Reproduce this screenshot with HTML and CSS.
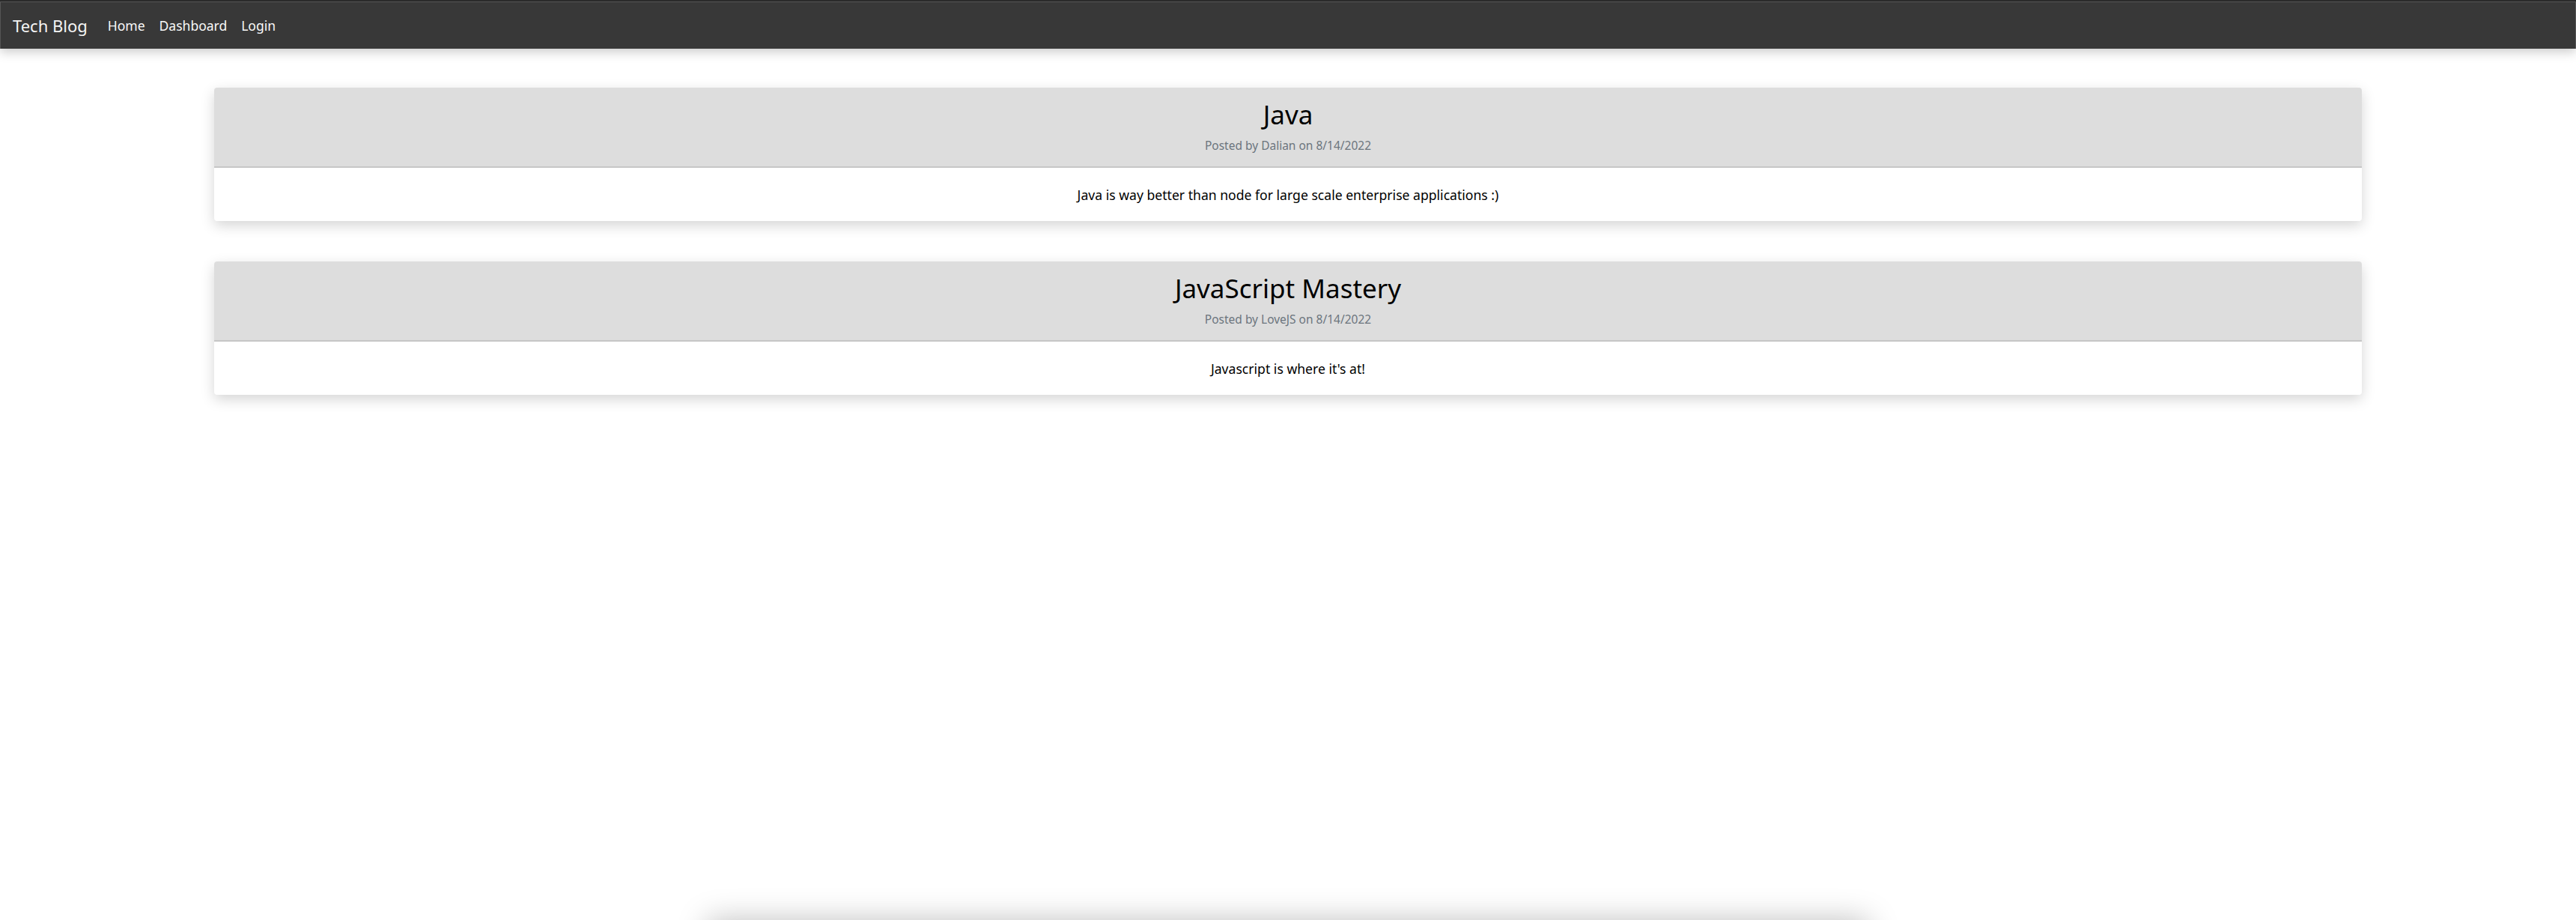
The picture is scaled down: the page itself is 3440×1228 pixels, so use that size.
FILE: index.html
```html
<!DOCTYPE html>
<html lang="en">
<head>
<meta charset="utf-8">
<title>Tech Blog</title>
<link rel="stylesheet" href="styles.css">
</head>
<body>
<div class="page">
  <nav class="navbar">
    <a class="brand" href="#">Tech Blog</a>
    <ul class="nav-links">
      <li><a href="#">Home</a></li>
      <li><a href="#">Dashboard</a></li>
      <li><a href="#">Login</a></li>
    </ul>
  </nav>
  <main class="posts">
    <article class="post">
      <header class="post-header">
        <h2 class="post-title">Java</h2>
        <p class="post-meta">Posted by Dalian on 8/14/2022</p>
      </header>
      <div class="post-body">
        <p>Java is way better than node for large scale enterprise applications :)</p>
      </div>
    </article>
    <article class="post">
      <header class="post-header">
        <h2 class="post-title">JavaScript Mastery</h2>
        <p class="post-meta">Posted by LoveJS on 8/14/2022</p>
      </header>
      <div class="post-body">
        <p>Javascript is where it's at!</p>
      </div>
    </article>
  </main>
</div>
<footer class="footer"></footer>
</body>
</html>
```
FILE: styles.css
```css
* { box-sizing: border-box; }
html, body { margin: 0; padding: 0; }
body {
  background: #ffffff;
  font-family: "Noto Sans", "Open Sans", sans-serif;
  color: #000;
}
.page { min-height: 100vh; }
.navbar {
  display: flex;
  align-items: center;
  height: 65px;
  padding: 0 0 0 17px;
  background: #383838;
  border-top: 2px solid #2a2a2a;
  box-shadow: inset 1px 1px 0 #555, inset -1px 0 0 #555, 0 4px 14px rgba(0,0,0,0.22);
  position: relative;
  z-index: 2;
}
.brand {
  color: #f4f4f4;
  font-size: 22px;
  text-decoration: none;
  margin-right: 27px;
}
.nav-links {
  display: flex;
  gap: 19px;
  list-style: none;
  margin: 0;
  padding: 0;
}
.nav-links a {
  color: #f8f8f8;
  font-size: 17.5px;
  text-decoration: none;
}
.posts {
  display: flex;
  flex-direction: column;
  gap: 54px;
  width: 2868px;
  margin: 52px auto 0;
}
.post {
  border-radius: 4px;
  overflow: hidden;
  box-shadow: 0 6px 18px rgba(0,0,0,0.17);
  background: #fff;
}
.post-header {
  background: #dddddd;
  border-bottom: 2px solid #c6c6c6;
  text-align: center;
  height: 107px;
  padding-top: 12px;
}
.post-title {
  margin: 0;
  font-size: 35px;
  font-weight: 400;
  line-height: 48px;
}
.post-meta {
  margin: 5px 0 0;
  font-size: 15.5px;
  line-height: 24px;
  color: #6c757d;
}
.post-body {
  text-align: center;
  height: 71px;
  padding-top: 24px;
}
.post-body p {
  margin: 0;
  font-size: 17.6px;
  line-height: 24px;
}
.footer {
  width: 1550px;
  height: 80px;
  margin: 0 auto;
  background: #fff;
  box-shadow: 0 0 40px rgba(0,0,0,0.25);
}
```
